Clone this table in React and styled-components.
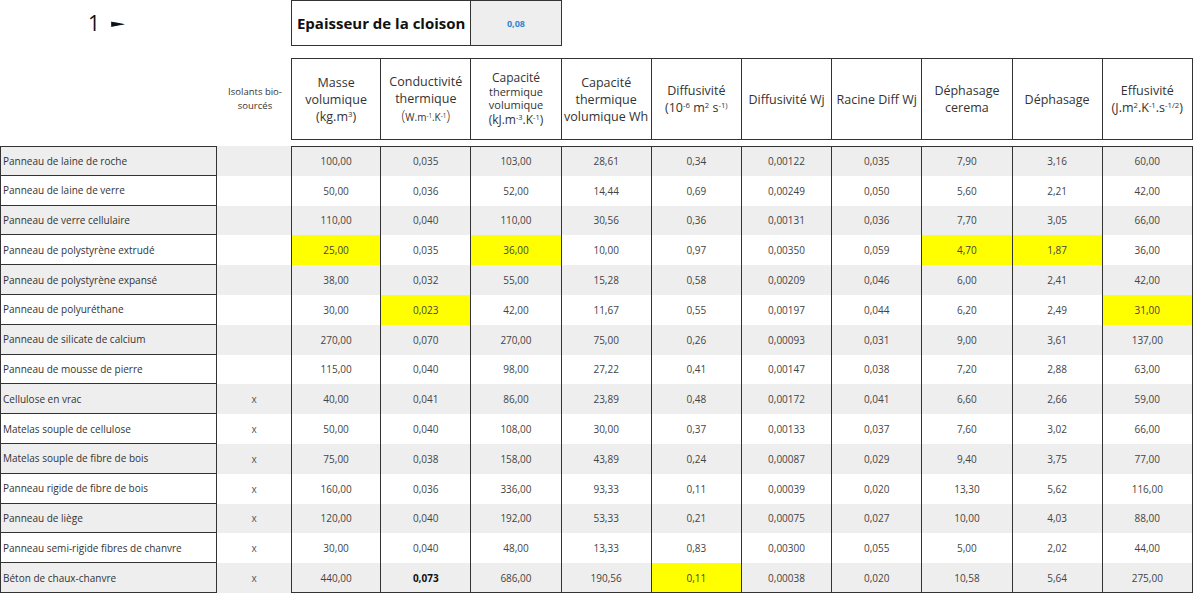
import React from "react";
import styled, { createGlobalStyle, css } from "styled-components";

const Global = createGlobalStyle`
  html, body { margin: 0; padding: 0; background: #fff; }
  body { font-family: "Open Sans", "Noto Sans", sans-serif; color: #333; }
  #root { width: 1200px; height: 600px; overflow: hidden; }
`;

const cols = css`
  display: grid;
  grid-template-columns: 217px 74px repeat(10, 90.2px);
`;

const LINE = "#333";
const GREY = "#eeeeee";
const YELLOW = "#ffff00";

const Page = styled.div`
  width: 1200px;
  height: 600px;
  box-sizing: border-box;
`;

const TopBar = styled.div`
  ${cols};
  height: 46px;
`;

const Title = styled.div`
  grid-column: 1 / span 2;
  display: flex;
  align-items: center;
  gap: 11px;
  padding-left: 88px;
  font-family: "Open Sans", sans-serif;
  font-weight: 400;
  font-size: 21px;
  color: #111;
`;

const Arrow = styled.span`
  display: inline-block;
  font-size: 18px;
  line-height: 1;
  transform: scaleY(0.6);
  color: #111;
  font-family: "DejaVu Sans", sans-serif;
`;

const LabelBox = styled.div`
  grid-column: 3 / span 2;
  border: 1px solid ${LINE};
  display: flex;
  align-items: center;
  justify-content: center;
  font-weight: 700;
  font-size: 15px;
  color: #111;
  box-sizing: border-box;
`;

const ValueBox = styled.div`
  grid-column: 5;
  border: 1px solid ${LINE};
  border-left: none;
  background: ${GREY};
  display: flex;
  align-items: center;
  justify-content: center;
  font-weight: 700;
  font-size: 9px;
  color: #2e86d3;
  box-sizing: border-box;
`;

const HeaderRow = styled.div`
  ${cols};
  height: 82px;
  margin-top: 12px;
`;

const BioHead = styled.div`
  grid-column: 2;
  display: flex;
  align-items: center;
  justify-content: center;
  text-align: center;
  font-size: 9.5px;
  line-height: 14px;
  color: #333;
  padding-left: 2px;
`;

const HeadCell = styled.div`
  box-sizing: border-box;
  border-top: 1px solid ${LINE};
  border-bottom: 1px solid ${LINE};
  border-right: 1px solid ${LINE};
  ${(p) => p.$first && css`border-left: 1px solid ${LINE};`}
  display: flex;
  flex-direction: column;
  align-items: center;
  justify-content: center;
  text-align: center;
  font-size: 12.5px;
  line-height: 17px;
  color: #333;
  white-space: nowrap;
`;

const Small = styled.span`
  font-size: ${(p) => p.$size || 11}px;
  line-height: ${(p) => p.$lh || 14}px;
`;

const Sup = styled.sup`
  font-size: 0.62em;
  vertical-align: 0.55em;
  line-height: 0;
`;

const Paren = styled.span`
  font-size: 14px;
  font-weight: 300;
`;

const Body = styled.div`
  ${cols};
  grid-template-rows: repeat(15, 29.8px);
  margin-top: 6px;
`;

const NameCell = styled.div`
  box-sizing: border-box;
  border-left: 1px solid ${LINE};
  border-right: 1px solid ${LINE};
  border-bottom: 1px solid ${LINE};
  ${(p) => p.$first && css`border-top: 1px solid ${LINE};`}
  background: ${(p) => (p.$odd ? GREY : "#fff")};
  display: flex;
  align-items: center;
  padding-left: 2px;
  font-size: 10px;
  color: #333;
  white-space: nowrap;
  overflow: hidden;
`;

const BioCell = styled.div`
  background: ${(p) => (p.$odd ? GREY : "#fff")};
  display: flex;
  align-items: center;
  justify-content: center;
  font-size: 10px;
  color: #555;
`;

const DataCell = styled.div`
  box-sizing: border-box;
  border-right: 1px solid ${LINE};
  ${(p) => p.$firstCol && css`border-left: 1px solid ${LINE};`}
  ${(p) => p.$first && css`border-top: 1px solid ${LINE};`}
  ${(p) => p.$last && css`border-bottom: 1px solid ${LINE};`}
  background: ${(p) => (p.$hl ? YELLOW : p.$odd ? GREY : "#fff")};
  display: flex;
  align-items: center;
  justify-content: center;
  font-size: 10px;
  font-weight: ${(p) => (p.$bold ? 700 : 400)};
  color: ${(p) => (p.$bold ? "#111" : "#444")};
`;

const rows = [
  ["Panneau de laine de roche", "", ["100,00", "0,035", "103,00", "28,61", "0,34", "0,00122", "0,035", "7,90", "3,16", "60,00"], []],
  ["Panneau de laine de verre", "", ["50,00", "0,036", "52,00", "14,44", "0,69", "0,00249", "0,050", "5,60", "2,21", "42,00"], []],
  ["Panneau de verre cellulaire", "", ["110,00", "0,040", "110,00", "30,56", "0,36", "0,00131", "0,036", "7,70", "3,05", "66,00"], []],
  ["Panneau de polystyrène extrudé", "", ["25,00", "0,035", "36,00", "10,00", "0,97", "0,00350", "0,059", "4,70", "1,87", "36,00"], [0, 2, 7, 8]],
  ["Panneau de polystyrène expansé", "", ["38,00", "0,032", "55,00", "15,28", "0,58", "0,00209", "0,046", "6,00", "2,41", "42,00"], []],
  ["Panneau de polyuréthane", "", ["30,00", "0,023", "42,00", "11,67", "0,55", "0,00197", "0,044", "6,20", "2,49", "31,00"], [1, 9]],
  ["Panneau de silicate de calcium", "", ["270,00", "0,070", "270,00", "75,00", "0,26", "0,00093", "0,031", "9,00", "3,61", "137,00"], []],
  ["Panneau de mousse de pierre", "", ["115,00", "0,040", "98,00", "27,22", "0,41", "0,00147", "0,038", "7,20", "2,88", "63,00"], []],
  ["Cellulose en vrac", "x", ["40,00", "0,041", "86,00", "23,89", "0,48", "0,00172", "0,041", "6,60", "2,66", "59,00"], []],
  ["Matelas souple de cellulose", "x", ["50,00", "0,040", "108,00", "30,00", "0,37", "0,00133", "0,037", "7,60", "3,02", "66,00"], []],
  ["Matelas souple de fibre de bois", "x", ["75,00", "0,038", "158,00", "43,89", "0,24", "0,00087", "0,029", "9,40", "3,75", "77,00"], []],
  ["Panneau rigide de fibre de bois", "x", ["160,00", "0,036", "336,00", "93,33", "0,11", "0,00039", "0,020", "13,30", "5,62", "116,00"], []],
  ["Panneau de liège", "x", ["120,00", "0,040", "192,00", "53,33", "0,21", "0,00075", "0,027", "10,00", "4,03", "88,00"], []],
  ["Panneau semi-rigide fibres de chanvre", "x", ["30,00", "0,040", "48,00", "13,33", "0,83", "0,00300", "0,055", "5,00", "2,02", "44,00"], []],
  ["Béton de chaux-chanvre", "x", ["440,00", "0,073", "686,00", "190,56", "0,11", "0,00038", "0,020", "10,58", "5,64", "275,00"], [4], [1]],
];

const headers = [
  <>
    <span>Masse</span>
    <span>volumique</span>
    <span>(kg.m<Sup>3</Sup>)</span>
  </>,
  <>
    <span>Conductivité</span>
    <span>thermique</span>
    <span>
      <Paren>(</Paren>
      <Small $size={10}>W.m<Sup>-1</Sup>.K<Sup>-1</Sup></Small>
      <Paren>)</Paren>
    </span>
  </>,
  <>
    <Small $size={12} $lh={14}>Capacité</Small>
    <Small $size={11} $lh={13}>thermique</Small>
    <Small $size={11} $lh={13}>volumique</Small>
    <Small $size={12} $lh={17}>(kJ.m<Sup>-3</Sup>.K<Sup>-1</Sup>)</Small>
  </>,
  <>
    <span>Capacité</span>
    <span>thermique</span>
    <span>volumique Wh</span>
  </>,
  <>
    <span>Diffusivité</span>
    <span>(10<Sup>-6</Sup> m<Sup>2</Sup> s<Sup>-1)</Sup></span>
  </>,
  <span>Diffusivité Wj</span>,
  <span>Racine Diff Wj</span>,
  <>
    <span>Déphasage</span>
    <span>cerema</span>
  </>,
  <span>Déphasage</span>,
  <>
    <span>Effusivité</span>
    <span>(J.m<Sup>2</Sup>.K<Sup>-1</Sup>.s<Sup>-1/2</Sup>)</span>
  </>,
];

export default function App() {
  return (
    <Page>
      <Global />
      <TopBar>
        <Title>
          <span>1</span>
          <Arrow>►</Arrow>
        </Title>
        <LabelBox>Epaisseur de la cloison</LabelBox>
        <ValueBox>0,08</ValueBox>
      </TopBar>
      <HeaderRow>
        <BioHead>
          Isolants bio-
          <br />
          sourcés
        </BioHead>
        {headers.map((h, i) => (
          <HeadCell key={i} $first={i === 0}>
            {h}
          </HeadCell>
        ))}
      </HeaderRow>
      <Body>
        {rows.map(([name, bio, vals, hl, bold = []], r) => {
          const odd = r % 2 === 0;
          const first = r === 0;
          const last = r === rows.length - 1;
          return (
            <React.Fragment key={r}>
              <NameCell $odd={odd} $first={first}>{name}</NameCell>
              <BioCell $odd={odd}>{bio}</BioCell>
              {vals.map((v, c) => (
                <DataCell
                  key={c}
                  $odd={odd}
                  $first={first}
                  $last={last}
                  $firstCol={c === 0}
                  $hl={hl.includes(c)}
                  $bold={bold.includes(c)}
                >
                  {v}
                </DataCell>
              ))}
            </React.Fragment>
          );
        })}
      </Body>
    </Page>
  );
}
